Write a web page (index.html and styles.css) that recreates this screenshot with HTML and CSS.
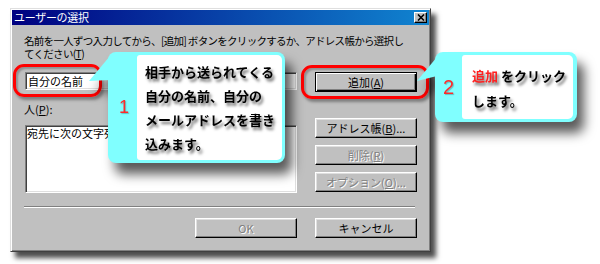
FILE: index.html
```html
<!DOCTYPE html>
<html lang="ja">
<head>
<meta charset="utf-8">
<title>ユーザーの選択</title>
<link rel="stylesheet" href="styles.css">
</head>
<body>
<div class="stage">
  <div class="dialog">
    <div class="titlebar">
      <span class="title">ユーザーの選択</span>
      <span class="close"><svg width="8" height="7" viewBox="0 0 8 7"><path d="M1 0.5 L7 6.5 M7 0.5 L1 6.5" stroke="#000" stroke-width="1.6" fill="none"/></svg></span>
    </div>
    <div class="body">
      <p class="intro"><span class="line">名前を一人ずつ入力してから、[追加]&nbsp;ボタンをクリックするか、アドレス帳から選択し</span><span class="line">てください(<u>T</u>)</span></p>
      <div class="main">
        <div class="left">
          <div class="field input">自分の名前</div>
          <div class="label">人(<u>P</u>):</div>
          <div class="field list">宛先に次の文字列を含む</div>
        </div>
        <div class="right">
          <div class="btn default">追加(<u>A</u>)</div>
          <div class="btn addr">アドレス帳(<u>B</u>)...</div>
          <div class="btn disabled del">削除(<u>R</u>)</div>
          <div class="btn disabled opt">オプション(<u>O</u>)...</div>
        </div>
      </div>
      <div class="sep"></div>
      <div class="bottom">
        <div class="btn disabled">OK</div>
        <div class="btn">キャンセル</div>
      </div>
    </div>
  </div>

  <div class="hl hl1"></div>
  <div class="hl hl2"></div>

  <div class="callout c1">
    <div class="ptr"></div>
    <div class="box">
      <div class="strip num1">1</div>
      <div class="panel">相手から送られてくる<br>自分の名前、自分の<br>メールアドレスを書き<br>込みます。</div>
    </div>
  </div>

  <div class="callout c2">
    <div class="ptr"></div>
    <div class="box">
      <div class="strip num2">2</div>
      <div class="panel"><span class="red">追加</span> をクリック<br>します。</div>
    </div>
  </div>
</div>
</body>
</html>
```

FILE: styles.css
```css
html, body {
  margin: 0;
  background: #fff;
}
body {
  font-family: "Noto Sans CJK JP", "Noto Sans", sans-serif;
  color: #000;
}
.stage {
  position: relative;
  width: 600px;
  height: 264px;
  overflow: hidden;
  box-sizing: border-box;
  padding: 8px 0 0 10px;
}
.dialog {
  width: 421px;
  height: 244px;
  box-sizing: border-box;
  background: #c0c0c0;
  border: 1px solid;
  border-color: #dfdfdf #404040 #404040 #dfdfdf;
  padding: 1px;
  box-shadow: inset 1px 1px #fff, inset -1px -1px #808080, 5px 6px 5px rgba(0,0,0,0.7);
  display: flex;
  flex-direction: column;
}
.titlebar {
  height: 15px;
  background: linear-gradient(to right, #000080, #1084d0);
  display: flex;
  align-items: center;
  justify-content: space-between;
}
.title {
  color: #fff;
  font-size: 11px;
  line-height: 15px;
  padding-left: 2px;
  letter-spacing: -0.3px;
}
.close {
  width: 13px;
  height: 11px;
  box-sizing: border-box;
  margin-right: 2px;
  background: #c0c0c0;
  border: 1px solid;
  border-color: #fff #000 #000 #fff;
  box-shadow: inset -1px -1px #808080;
  display: flex;
  align-items: center;
  justify-content: center;
}
.close svg { display: block; }
.body {
  flex: 1;
  padding: 0 12px;
  display: flex;
  flex-direction: column;
}
.intro {
  margin: 10px 0 0;
  font-size: 10.5px;
  letter-spacing: -0.7px;
  white-space: nowrap;
  display: flex;
  flex-direction: column;
}
.intro .line {
  display: block;
  height: 12px;
  line-height: 12px;
}
.intro .line + .line { margin-top: 1px; }
u {
  text-decoration-thickness: 1px;
  text-underline-offset: 1px;
}
.main {
  display: flex;
  gap: 18px;
  margin-top: 12px;
}
.left {
  width: 273px;
  display: flex;
  flex-direction: column;
}
.right {
  width: 102px;
  display: flex;
  flex-direction: column;
}
.field {
  box-sizing: border-box;
  background: #fff;
  border: 1px solid;
  border-color: #808080 #fff #fff #808080;
  box-shadow: inset 1px 1px #404040, inset -1px -1px #dfdfdf;
  font-size: 11px;
  margin-left: 1px;
}
.input {
  height: 18px;
  display: flex;
  align-items: center;
  padding-left: 2px;
}
.label {
  margin-top: 13px;
  font-size: 11px;
  line-height: 12px;
  height: 12px;
}
.list {
  margin-top: 10px;
  height: 68px;
  padding: 1px 0 0 1px;
  line-height: 13px;
  white-space: nowrap;
  overflow: hidden;
}
.btn {
  width: 102px;
  height: 20px;
  box-sizing: border-box;
  background: #c0c0c0;
  border: 1px solid;
  border-color: #fff #000 #000 #fff;
  box-shadow: inset -1px -1px #808080, inset 1px 1px #dfdfdf;
  display: flex;
  align-items: center;
  justify-content: center;
  font-size: 11px;
  white-space: nowrap;
}
.btn.default {
  border-color: #000;
  box-shadow: inset 1px 1px #fff, inset -1px -1px #000, inset -2px -2px #808080;
}
.btn.addr { margin-top: 26px; }
.btn.del, .btn.opt { margin-top: 7px; }
.btn.disabled {
  color: #808080;
  text-shadow: 1px 1px 0 #fff;
}
.sep {
  margin-top: 13px;
  margin-right: 2px;
  border-top: 1px solid #808080;
  border-bottom: 1px solid #fff;
}
.bottom {
  margin-top: 10px;
  display: flex;
  justify-content: flex-end;
  gap: 18px;
}

/* highlights */
.hl {
  position: absolute;
  box-sizing: border-box;
  border: 3px solid #ff0000;
  border-radius: 11px;
  box-shadow: 2px 3px 3px rgba(0,0,0,0.35), inset 2px 2px 2px rgba(0,0,0,0.25);
}
.hl1 { left: 13px; top: 64px; width: 89px; height: 33px; }
.hl2 { left: 301px; top: 65px; width: 128px; height: 34px; }

/* callouts */
.callout {
  position: absolute;
  display: flex;
  justify-content: flex-end;
  filter: drop-shadow(7px 11px 6px rgba(0,0,0,0.65));
}
.c1 { left: 89px; top: 52px; width: 196px; height: 111px; }
.c2 { left: 417px; top: 52px; width: 160px; height: 70px; }
.ptr {
  position: absolute;
  left: 0;
  top: 0;
  width: 22px;
  height: 40px;
  background: #80ffff;
}
.c1 .ptr { clip-path: polygon(0 29px, 21px 4px, 21px 28px); }
.c2 .ptr { clip-path: polygon(0 29px, 20px 5px, 20px 24px); }
.box {
  box-sizing: border-box;
  height: 100%;
  background: #80ffff;
  border-radius: 8px;
  display: flex;
  padding: 3px 3px 3px 0;
}
.c1 .box { width: 177px; }
.c2 .box { width: 142px; padding: 3px 4px 3px 0; }
.strip {
  display: flex;
  align-items: center;
  justify-content: center;
  color: #ff2a2a;
  font-family: "Liberation Sans", sans-serif;
  text-shadow: 1px 1px 1px rgba(0,0,0,0.25);
}
.num1 { width: 29px; font-size: 18px; padding-left: 3px; box-sizing: border-box; }
.num2 { width: 27px; font-size: 20px; }
.panel {
  flex: 1;
  background: #fff;
  border-radius: 3px 5px 5px 3px;
  font-weight: bold;
  font-size: 13px;
  white-space: nowrap;
  text-shadow: 2px 3px 3px rgba(0,0,0,0.6);
}
.c1 .panel { padding: 5px 0 0 8px; line-height: 24px; }
.c2 .panel { padding: 8px 0 0 10px; line-height: 25px; }
.red { color: #ff2020; }
```
